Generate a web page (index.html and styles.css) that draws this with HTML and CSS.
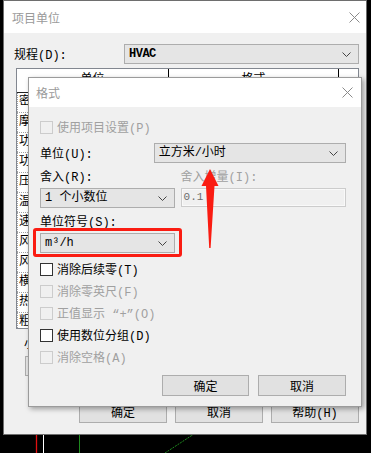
FILE: index.html
```html
<!DOCTYPE html>
<html lang="zh-CN">
<head>
    <meta charset="UTF-8">
    <meta name="viewport" content="width=device-width, initial-scale=1.0">
    <title>项目单位</title>
    <link rel="stylesheet" href="styles.css">
</head>
<body>
    <div class="window">
        <div class="titlebar">
            <span class="title">项目单位</span>
            <svg class="close" width="11" height="11" viewBox="0 0 11 11"><path d="M0.5 0.5 L10.5 10.5 M10.5 0.5 L0.5 10.5" stroke="#8a8a8a" stroke-width="1"/></svg>
        </div>
        <div class="win-body">
            <div class="field-row">
                <label class="field-label">规程(D):</label>
                <div class="select discipline">
                    <span class="bold">HVAC</span>
                    <svg class="chev" width="9" height="5" viewBox="0 0 9 5"><path d="M0.5 0.5 L4.5 4.5 L8.5 0.5" fill="none" stroke="#444"/></svg>
                </div>
            </div>

            <div class="grid">
                <div class="grid-head">
                    <div class="cell c1">单位</div>
                    <div class="cell c2">格式</div>
                    <div class="cell c3">▴</div>
                </div>
                <div class="grid-row"><div class="cell c1">密度</div><div class="cell c2"></div></div>
                <div class="grid-row"><div class="cell c1">摩擦</div><div class="cell c2"></div></div>
                <div class="grid-row"><div class="cell c1">功率</div><div class="cell c2"></div></div>
                <div class="grid-row"><div class="cell c1">功率密度</div><div class="cell c2"></div></div>
                <div class="grid-row"><div class="cell c1">压力</div><div class="cell c2"></div></div>
                <div class="grid-row"><div class="cell c1">温度</div><div class="cell c2"></div></div>
                <div class="grid-row"><div class="cell c1">速度</div><div class="cell c2"></div></div>
                <div class="grid-row"><div class="cell c1">风量</div><div class="cell c2"></div></div>
                <div class="grid-row"><div class="cell c1">风管尺寸</div><div class="cell c2"></div></div>
                <div class="grid-row"><div class="cell c1">横截面</div><div class="cell c2"></div></div>
                <div class="grid-row"><div class="cell c1">热增益</div><div class="cell c2"></div></div>
                <div class="grid-row"><div class="cell c1">粗糙度</div><div class="cell c2"></div></div>
            </div>

            <div class="sub-label">小数</div>
            <div class="select grouping"></div>

            <div class="btn-row">
                <button class="btn">确定</button>
                <button class="btn">取消</button>
                <button class="btn">帮助(H)</button>
            </div>
        </div>

        <!-- 格式 dialog, opened over the project units window -->
        <div class="dialog">
            <div class="titlebar dlg-titlebar">
                <span class="title">格式</span>
                <svg class="close" width="11" height="11" viewBox="0 0 11 11"><path d="M0.5 0.5 L10.5 10.5 M10.5 0.5 L0.5 10.5" stroke="#8a8a8a" stroke-width="1"/></svg>
            </div>
            <div class="dlg-body">
                <div class="check-row first disabled"><span class="box"></span>使用项目设置(P)</div>

                <div class="unit-row">
                    <label class="unit-label">单位(U):</label>
                    <div class="select unit-select">
                        <span>立方米/小时</span>
                        <svg class="chev" width="9" height="5" viewBox="0 0 9 5"><path d="M0.5 0.5 L4.5 4.5 L8.5 0.5" fill="none" stroke="#444"/></svg>
                    </div>
                </div>

                <div class="round-row">
                    <div class="round-col">
                        <div class="row-label">舍入(R):</div>
                        <div class="select">
                            <span>1 个小数位</span>
                            <svg class="chev" width="9" height="5" viewBox="0 0 9 5"><path d="M0.5 0.5 L4.5 4.5 L8.5 0.5" fill="none" stroke="#444"/></svg>
                        </div>
                    </div>
                    <div class="step-col">
                        <div class="row-label disabled">舍入增量(I):</div>
                        <div class="input-off">0.1</div>
                    </div>
                </div>

                <div class="row-label sym-label">单位符号(S):</div>
                <div class="sym-wrap">
                    <div class="select">
                        <span>m³/h</span>
                        <svg class="chev" width="9" height="5" viewBox="0 0 9 5"><path d="M0.5 0.5 L4.5 4.5 L8.5 0.5" fill="none" stroke="#444"/></svg>
                    </div>
                </div>

                <div class="checks">
                    <div class="check-row"><span class="box"></span>消除后续零(T)</div>
                    <div class="check-row disabled"><span class="box"></span>消除零英尺(F)</div>
                    <div class="check-row disabled"><span class="box"></span>正值显示 “+”(O)</div>
                    <div class="check-row"><span class="box"></span>使用数位分组(D)</div>
                    <div class="check-row disabled"><span class="box"></span>消除空格(A)</div>
                </div>

                <div class="dlg-buttons">
                    <button class="btn ok">确定</button>
                    <button class="btn cancel">取消</button>
                </div>
            </div>
        </div>
    </div>

    <!-- drawing area behind the windows -->
    <svg class="canvas" width="371" height="18" viewBox="0 0 371 18">
        <line x1="36.5" y1="0" x2="36.5" y2="18" stroke="#e01010" stroke-width="1.3"/>
        <line x1="43.5" y1="0" x2="43.5" y2="18" stroke="#ffffff" stroke-width="1"/>
        <line x1="79.5" y1="0" x2="79.5" y2="18" stroke="#1f8a1f" stroke-width="1"/>
        <line x1="165" y1="18" x2="194" y2="-1" stroke="#1f8a1f" stroke-width="1" stroke-dasharray="2 1"/>
    </svg>

    <!-- annotation arrow -->
    <svg class="arrow" width="20" height="82" viewBox="0 0 20 82">
        <path d="M10 1 L18.5 18 L14.5 18 L10.6 80 L9.2 80 L6 18 L1.5 18 Z" fill="#fa1c12"/>
    </svg>
</body>
</html>
```

FILE: styles.css
```css
* {
    box-sizing: border-box;
    margin: 0;
    padding: 0;
}

body {
    position: relative;
    width: 371px;
    height: 453px;
    overflow: hidden;
    background: #000;
    font-family: "Liberation Mono", "Noto Sans CJK SC", monospace;
    font-size: 12px;
    color: #000;
}

.window {
    position: relative;
    width: 364px;
    height: 435px;
    margin-left: 3px;
    background: #f0f0f0;
    border: 1px solid #6e6e6e;
}

.titlebar {
    display: flex;
    align-items: center;
    justify-content: space-between;
    height: 32px;
    padding: 0 6px 0 8px;
    background: #fff;
}

.title {
    font-family: "Noto Sans CJK SC", sans-serif;
    font-size: 12px;
    color: #9a9a9a;
}

.win-body {
    padding: 11px 7px 0 10px;
}

.field-row {
    display: flex;
    align-items: center;
    height: 20px;
}

.field-label {
    width: 110px;
}

.select {
    display: flex;
    align-items: center;
    justify-content: space-between;
    height: 20px;
    padding: 0 7px 0 4px;
    background: #e5e5e5;
    border: 1px solid #adadad;
    line-height: 18px;
}

.discipline {
    flex: 1;
}

.bold {
    font-weight: bold;
    letter-spacing: -0.5px;
}

.chev {
    flex-shrink: 0;
}

.grid {
    height: 261px;
    margin: 4px 0 0 2px;
    overflow: hidden;
    background: #fff;
    border: 1px solid #828790;
}

.grid-head {
    display: flex;
    height: 24px;
    border-bottom: 1px solid #222;
}

.grid-head .cell {
    text-align: center;
    line-height: 23px;
}

.grid-head .c1,
.grid-head .c2 {
    border-right: 1px solid #000;
}

.cell {
    flex-shrink: 0;
    white-space: nowrap;
    overflow: hidden;
}

.c1 {
    width: 152px;
}

.c2 {
    width: 170px;
}

.c3 {
    flex: 1;
    color: #666;
}

.grid-row {
    display: flex;
    height: 20px;
    line-height: 19px;
    border-bottom: 1px dotted #a0a0a0;
}

.grid-row .cell {
    padding-left: 1px;
    border-left: 1px dotted #a0a0a0;
}

.sub-label {
    height: 20px;
    margin: 6px 0 0 10px;
    line-height: 20px;
}

.grouping {
    width: 130px;
    margin: 1px 0 0 11px;
}

.btn-row {
    display: flex;
    justify-content: flex-end;
    gap: 8px;
    margin-top: 25px;
}

.btn {
    width: 88px;
    height: 22px;
    font-family: inherit;
    font-size: 12px;
    color: #000;
    background: #e1e1e1;
    border: 1px solid #adadad;
}

/* format dialog */

.dialog {
    position: absolute;
    left: 24px;
    top: 76px;
    width: 334px;
    height: 330px;
    background: #f0f0f0;
    border: 1px solid #9b9b9b;
    box-shadow: 2px 2px 5px rgba(0, 0, 0, 0.35);
}

.dlg-titlebar {
    height: 29px;
    padding: 0 8px 0 7px;
}

.dlg-body {
    padding: 10px 15px 0 11px;
}

.disabled {
    color: #a0a0a0;
}

.check-row {
    display: flex;
    align-items: center;
    height: 22px;
}

.check-row.first {
    height: 20px;
}

.box {
    width: 13px;
    height: 13px;
    margin-right: 4px;
    background: #fff;
    border: 1px solid #333;
}

.check-row.disabled .box {
    background: #f0f0f0;
    border-color: #cccccc;
}

.unit-row {
    display: flex;
    align-items: center;
    margin-top: 6px;
}

.unit-label {
    width: 116px;
}

.unit-select {
    width: 196px;
}

.round-row {
    display: flex;
    gap: 6px;
    margin-top: 5px;
}

.round-col {
    width: 135px;
}

.step-col {
    width: 166px;
}

.row-label {
    height: 20px;
    line-height: 20px;
}

.input-off {
    height: 19px;
    padding-left: 2px;
    font-size: 11px;
    line-height: 17px;
    color: #6d6d6d;
    background: #f0f0f0;
    border: 1px solid #cccccc;
    box-shadow: inset 0 0 0 1px #f9f9f9;
}

.sym-label {
    margin-top: 5px;
}

.sym-wrap {
    position: relative;
    width: 135px;
}

.sym-wrap::after {
    content: "";
    position: absolute;
    top: -5px;
    right: -7px;
    bottom: -4px;
    left: -7px;
    border: 3px solid #fa1c12;
    border-radius: 3px;
}

.checks {
    margin-top: 5px;
}

.dlg-buttons {
    display: flex;
    justify-content: flex-end;
    gap: 9px;
    margin-top: 7px;
}

.dlg-buttons .btn {
    height: 21px;
}

.dlg-buttons .ok {
    width: 87px;
}

.canvas {
    display: block;
}

.arrow {
    position: absolute;
    left: 200px;
    top: 168px;
}
```
